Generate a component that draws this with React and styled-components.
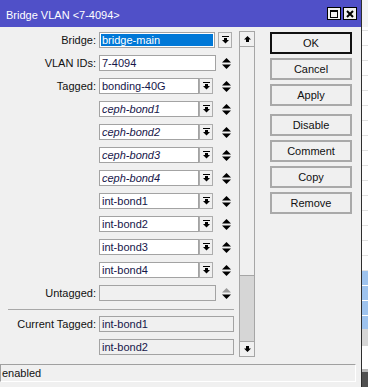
import React from 'react';
import styled, { createGlobalStyle } from 'styled-components';

const GlobalStyle = createGlobalStyle`
  html, body {
    margin: 0;
    padding: 0;
    background: #f0f0f0;
  }
  body {
    font-family: "Liberation Sans", Arial, sans-serif;
    font-size: 11px;
    color: #111;
  }
  #root {
    width: 368px;
    height: 387px;
    overflow: hidden;
  }
`;

const rows = [
  { label: 'VLAN IDs:', value: '7-4094', spin: true },
  { label: 'Tagged:', value: 'bonding-40G', drop: true, spin: true },
  { value: 'ceph-bond1', drop: true, spin: true, dynamic: true },
  { value: 'ceph-bond2', drop: true, spin: true, dynamic: true },
  { value: 'ceph-bond3', drop: true, spin: true, dynamic: true },
  { value: 'ceph-bond4', drop: true, spin: true, dynamic: true },
  { value: 'int-bond1', drop: true, spin: true },
  { value: 'int-bond2', drop: true, spin: true },
  { value: 'int-bond3', drop: true, spin: true },
  { value: 'int-bond4', drop: true, spin: true },
  { label: 'Untagged:', value: '', spin: true, disabled: true },
];

const buttons = [
  { text: 'OK', primary: true },
  { text: 'Cancel' },
  { text: 'Apply' },
  { text: 'Disable', spaced: true },
  { text: 'Comment' },
  { text: 'Copy' },
  { text: 'Remove' },
];

function DropIcon() {
  return (
    <svg width="7" height="8" viewBox="0 0 7 8" fill="#000">
      <rect x="0" y="0" width="7" height="1" />
      <rect x="2" y="2" width="3" height="2" />
      <path d="M0 4h7L3.5 7.5z" />
    </svg>
  );
}

function SpinIcon({ upColor = '#000' }) {
  return (
    <svg width="9" height="11" viewBox="0 0 9 11">
      <path d="M4.5 0L9 4.5H0z" fill={upColor} />
      <path d="M0 6.5h9L4.5 11z" fill="#000" />
    </svg>
  );
}

function ArrowIcon({ down }) {
  return (
    <svg width="7" height="6" viewBox="0 0 7 6" fill="#000">
      {down
        ? <path d="M2 0h3v2.5h2L3.5 6 0 2.5h2z" />
        : <path d="M3.5 0L7 3.5H5V6H2V3.5H0z" />}
    </svg>
  );
}

export default function App() {
  return (
    <Screen>
      <GlobalStyle />
      <Window>
        <TitleBar>
          <Title>Bridge VLAN &lt;7-4094&gt;</Title>
          <TitleButtons>
            <TitleButton>
              <svg width="8" height="8" viewBox="0 0 8 8">
                <rect x="0.5" y="1" width="7" height="6.5" fill="none" stroke="#000" />
                <rect x="0" y="0" width="8" height="2" fill="#000" />
              </svg>
            </TitleButton>
            <TitleButton>
              <svg width="8" height="8" viewBox="0 0 8 8">
                <path d="M1 1l6 6M7 1L1 7" stroke="#000" strokeWidth="2" />
              </svg>
            </TitleButton>
          </TitleButtons>
        </TitleBar>

        <Body>
          <Form>
            <Row>
              <Label>Bridge:</Label>
              <Controls>
                <Field $width={116}>
                  <Selected>bridge-main</Selected>
                </Field>
                <DropButton $gap={3}><DropIcon /></DropButton>
              </Controls>
            </Row>
            {rows.map((r, i) => (
              <Row key={i}>
                <Label>{r.label}</Label>
                <Controls>
                  <Field $width={r.drop ? 100 : 117} $dynamic={r.dynamic} $disabled={r.disabled}>
                    {r.value}
                  </Field>
                  {r.drop && <DropButton $gap={0}><DropIcon /></DropButton>}
                  {r.spin && (
                    <Spin>
                      <SpinIcon upColor={r.disabled ? '#9a9a9a' : '#000'} />
                    </Spin>
                  )}
                </Controls>
              </Row>
            ))}
            <Separator />
            <Row>
              <Label>Current Tagged:</Label>
              <Controls>
                <Field $width={135} $disabled>int-bond1</Field>
              </Controls>
            </Row>
            <Row>
              <Label />
              <Controls>
                <Field $width={135} $disabled>int-bond2</Field>
              </Controls>
            </Row>
          </Form>

          <ScrollBar>
            <ScrollButton><ArrowIcon /></ScrollButton>
            <Thumb />
            <Track />
            <ScrollButton $bottom><ArrowIcon down /></ScrollButton>
          </ScrollBar>

          <ButtonColumn>
            {buttons.map((b) => (
              <Button key={b.text} $primary={b.primary} $spaced={b.spaced}>
                {b.text}
              </Button>
            ))}
          </ButtonColumn>
        </Body>

        <StatusBar>enabled</StatusBar>
      </Window>

      <BackStrip>
        <Band $h={27} $bg="#f4f4f4" />
        <Band $h={244} $bg="#ffffff" $lines="#e2e2e2" $offset={3} />
        <Band $h={58} $bg="#9ec3ee" $lines="#ffffff" $offset={14} />
        <Band $h={17} $bg="#d6d6d6" />
        <Band $h={23} $bg="#ffffff" />
        <Band $h={3} $bg="#b8b8b8" />
        <Band $h={15} $bg="#505050" />
      </BackStrip>
    </Screen>
  );
}

const Screen = styled.div`
  display: flex;
  width: 368px;
  height: 387px;
  overflow: hidden;
`;

const Window = styled.div`
  width: 362px;
  height: 387px;
  box-sizing: border-box;
  border-right: 1px solid #2e2e2e;
  background: #f0f0f0;
  display: flex;
  flex-direction: column;
`;

const TitleBar = styled.div`
  height: 27px;
  flex-shrink: 0;
  box-sizing: border-box;
  padding: 2px 4px 0 6px;
  background: #5050c8;
  display: flex;
  align-items: center;
`;

const Title = styled.div`
  color: #fff;
  font-size: 11px;
`;

const TitleButtons = styled.div`
  margin-left: auto;
  display: flex;
  gap: 2px;
  margin-top: -2px;
`;

const TitleButton = styled.div`
  width: 14px;
  height: 13px;
  box-sizing: border-box;
  border: 1px solid #000;
  background: #f0f0f0;
  display: flex;
  align-items: center;
  justify-content: center;
`;

const Body = styled.div`
  height: 337px;
  flex-shrink: 0;
  display: flex;
  align-items: flex-start;
`;

const Form = styled.div`
  width: 236px;
  padding-top: 5px;
`;

const Row = styled.div`
  display: flex;
  height: 23px;
  align-items: flex-start;
`;

const Label = styled.div`
  width: 99px;
  flex-shrink: 0;
  box-sizing: border-box;
  padding-right: 3px;
  text-align: right;
  line-height: 16px;
  white-space: nowrap;
  color: #111;
`;

const Controls = styled.div`
  display: flex;
  align-items: center;
  width: 133px;
  height: 16px;
`;

const Field = styled.div`
  width: ${(p) => p.$width}px;
  height: 16px;
  flex-shrink: 0;
  box-sizing: border-box;
  border: 1px solid #a3a3a3;
  background: ${(p) => (p.$disabled ? '#f0f0f0' : '#fff')};
  padding: 0 0 0 2px;
  line-height: 14px;
  color: #16164a;
  font-style: ${(p) => (p.$dynamic ? 'italic' : 'normal')};
  white-space: nowrap;
  overflow: hidden;
`;

const Selected = styled.div`
  margin: 1px 1px 1px -1px;
  height: 12px;
  line-height: 12px;
  padding-left: 1px;
  background: #0078d7;
  color: #fff;
`;

const DropButton = styled.div`
  width: 14px;
  height: 16px;
  margin-left: ${(p) => p.$gap}px;
  flex-shrink: 0;
  box-sizing: border-box;
  border: 1px solid #adadad;
  background: #f0f0f0;
  display: flex;
  align-items: center;
  justify-content: center;
`;

const Spin = styled.div`
  margin-left: auto;
  margin-right: 1px;
  width: 10px;
  display: flex;
  justify-content: center;
`;

const Separator = styled.div`
  height: 1px;
  margin: 1px 2px 6px 8px;
  background: #a8a8a8;
`;

const ScrollBar = styled.div`
  margin: 4px 0 0 3px;
  width: 16px;
  height: 326px;
  box-sizing: border-box;
  border: 1px solid #a6a6a6;
  display: flex;
  flex-direction: column;
`;

const ScrollButton = styled.div`
  height: 14px;
  flex-shrink: 0;
  background: #f0f0f0;
  border-${(p) => (p.$bottom ? 'top' : 'bottom')}: 1px solid #a6a6a6;
  display: flex;
  align-items: center;
  justify-content: center;
`;

const Thumb = styled.div`
  height: 228px;
  flex-shrink: 0;
  background: #f0f0f0;
  border-bottom: 1px solid #a6a6a6;
`;

const Track = styled.div`
  flex: 1;
  background: #d6d6d6;
`;

const ButtonColumn = styled.div`
  margin: 5px 0 0 15px;
  width: 82px;
  display: flex;
  flex-direction: column;
  gap: 4px;
`;

const Button = styled.div`
  height: 22px;
  box-sizing: border-box;
  border: 2px solid ${(p) => (p.$primary ? '#111' : '#a9a9a9')};
  background: #f0f0f0;
  margin-top: ${(p) => (p.$spaced ? 4 : 0)}px;
  display: flex;
  align-items: center;
  justify-content: center;
  font-size: 11px;
  color: #111;
`;

const StatusBar = styled.div`
  width: 356px;
  height: 18px;
  box-sizing: border-box;
  border-top: 1px solid #a0a0a0;
  border-left: 1px solid #a0a0a0;
  border-right: 1px solid #fff;
  border-bottom: 1px solid #fff;
  padding-left: 1px;
  line-height: 16px;
  color: #111;
`;

const BackStrip = styled.div`
  flex: 1;
  display: flex;
  flex-direction: column;
`;

const Band = styled.div`
  height: ${(p) => p.$h}px;
  flex-shrink: 0;
  background-color: ${(p) => p.$bg};
  background-image: ${(p) =>
    p.$lines
      ? `repeating-linear-gradient(to bottom, transparent 0 ${p.$offset}px, ${p.$lines} ${p.$offset}px ${p.$offset + 1}px, transparent ${p.$offset + 1}px 15px)`
      : 'none'};
`;
